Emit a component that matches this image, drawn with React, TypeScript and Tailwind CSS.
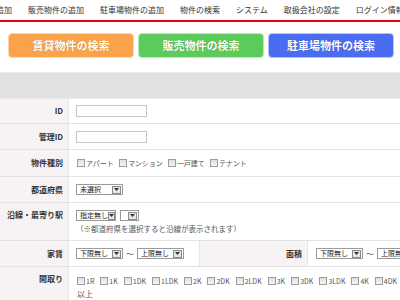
import React from "react";

const Sel = ({ label, w }: { label: string; w: string }) => (
  <div className={`flex items-center justify-between h-[11px] border border-[#9a9a9a] bg-white pl-[3px] pr-[1px] ${w}`}>
    <span className="text-[7px] leading-none text-[#222] whitespace-nowrap">{label}</span>
    <span className="flex items-center justify-center w-[9px] h-[8px] border border-[#8a8a8a] bg-[#e6e6e6]">
      <svg width="5" height="3" viewBox="0 0 5 3"><path d="M0 0h5L2.5 3z" fill="#333" /></svg>
    </span>
  </div>
);

const Cb = ({ label }: { label: string }) => (
  <span className="flex items-center gap-[1px] whitespace-nowrap">
    <span className="inline-block w-[8px] h-[8px] border border-[#9c9c9c] bg-gradient-to-b from-[#e0e0e0] to-[#f4f4f4]" />
    <span>{label}</span>
  </span>
);

const Label = ({ children, top }: { children: React.ReactNode; top?: boolean }) => (
  <div
    className={`w-[69px] shrink-0 flex justify-end pr-[5px] bg-[#f7f3f5] border-r border-[#e6e6e6] text-[8px] font-bold text-[#333] ${
      top ? "items-start pt-[6px]" : "items-center"
    }`}
  >
    {children}
  </div>
);

export default function App() {
  const nav = ["賃貸物件の追加", "販売物件の追加", "駐車場物件の追加", "物件の検索", "システム", "取扱会社の設定", "ログイン情報の変更"];
  const madori = ["1R", "1K", "1DK", "1LDK", "2K", "2DK", "2LDK", "3K", "3DK", "3LDK", "4K", "4DK", "4LDK", "5K"];
  return (
    <div className="w-[400px] h-[300px] overflow-hidden bg-white font-['Noto_Sans_CJK_JP','Liberation_Sans',sans-serif]">
      <div className="h-[20px] flex items-center gap-[16px] ml-[-44px] text-[8px] text-[#333] whitespace-nowrap">
        {nav.map((n) => (
          <span key={n}>{n}</span>
        ))}
      </div>
      <div className="h-[2px] bg-[#e60012]" />
      <div className="flex gap-[4px] pl-[8px] mt-[11px]">
        <div className="w-[126px] h-[25px] rounded-[4px] border border-[#ffd6a8] bg-[#fba34a] flex items-center justify-center text-white font-bold text-[11px] [text-shadow:0_0_1px_rgba(0,0,0,0.3)]">
          賃貸物件の検索
        </div>
        <div className="w-[126px] h-[25px] rounded-[4px] border border-[#b6ecb6] bg-[#5ccb5c] flex items-center justify-center text-white font-bold text-[11px] [text-shadow:0_0_1px_rgba(0,0,0,0.3)]">
          販売物件の検索
        </div>
        <div className="w-[126px] h-[25px] rounded-[4px] border border-[#b4c4fb] bg-[#4a6cf0] flex items-center justify-center text-white font-bold text-[11px] [text-shadow:0_0_1px_rgba(0,0,0,0.3)]">
          駐車場物件の検索
        </div>
      </div>
      <div className="mt-[14px] h-[27px] bg-[#e1e1e1] border-y border-[#ececec]" />
      <div className="w-[560px] text-[8px] text-[#555]">
        <div className="flex h-[25px] border-b border-[#e2e2e2]">
          <Label>ID</Label>
          <div className="flex items-center pl-[7px]">
            <div className="w-[71px] h-[12px] border border-[#c6c6c6] bg-white" />
          </div>
        </div>
        <div className="flex h-[26px] border-b border-[#e2e2e2]">
          <Label>管理ID</Label>
          <div className="flex items-center pl-[7px]">
            <div className="w-[71px] h-[12px] border border-[#c6c6c6] bg-white" />
          </div>
        </div>
        <div className="flex h-[27px] border-b border-[#e2e2e2]">
          <Label>物件種別</Label>
          <div className="flex items-center gap-[5px] pl-[8px] text-[7px]">
            <Cb label="アパート" />
            <Cb label="マンション" />
            <Cb label="一戸建て" />
            <Cb label="テナント" />
          </div>
        </div>
        <div className="flex h-[26px] border-b border-[#e2e2e2]">
          <Label>都道府県</Label>
          <div className="flex items-center pl-[7px]">
            <Sel label="未選択" w="w-[47px]" />
          </div>
        </div>
        <div className="flex h-[38px] border-b border-[#e2e2e2]">
          <Label top>沿線・最寄り駅</Label>
          <div className="flex flex-col pl-[7px] pt-[7px] gap-[4px]">
            <div className="flex items-center gap-[4px]">
              <Sel label="指定無し" w="w-[40px]" />
              <Sel label="" w="w-[19px]" />
            </div>
            <div className="text-[7.5px] leading-none whitespace-nowrap">（※都道府県を選択すると沿線が表示されます）</div>
          </div>
        </div>
        <div className="flex h-[26px] border-b border-[#e2e2e2]">
          <Label>家賃</Label>
          <div className="w-[131px] flex items-center gap-[3px] pl-[7px] border-r border-[#e6e6e6]">
            <Sel label="下限無し" w="w-[47px]" />
            <span>～</span>
            <Sel label="上限無し" w="w-[47px]" />
          </div>
          <div className="w-[108px] flex items-center justify-end pr-[5px] bg-[#f7f3f5] border-r border-[#e6e6e6] font-bold text-[#333]">
            面積
          </div>
          <div className="flex items-center gap-[3px] pl-[8px]">
            <Sel label="下限無し" w="w-[47px]" />
            <span>～</span>
            <Sel label="上限無し" w="w-[47px]" />
          </div>
        </div>
        <div className="flex h-[40px]">
          <Label top>間取り</Label>
          <div className="flex flex-col pl-[8px] pt-[9px] gap-[3px]">
            <div className="flex items-center gap-[6px] text-[7px]">
              {madori.map((m) => (
                <Cb key={m} label={m} />
              ))}
            </div>
            <div className="leading-none">以上</div>
          </div>
        </div>
      </div>
    </div>
  );
}
